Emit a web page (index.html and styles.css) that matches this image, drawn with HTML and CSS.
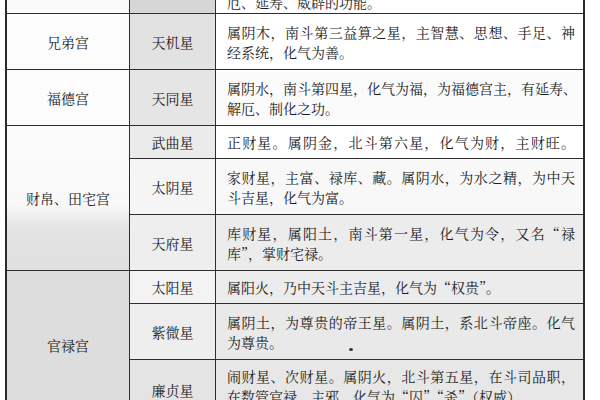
FILE: index.html
```html
<!DOCTYPE html>
<html lang="zh-CN">
<head>
<meta charset="utf-8">
<title>十四主星</title>
<link rel="stylesheet" href="styles.css">
</head>
<body>
<div class="sheet">
  <div class="table">
    <div class="c1 t-top"></div>
    <div class="c2 g-top"></div>
    <div class="c3 top"><span class="ln">厄、延寿、威辟的功能。</span></div>

    <div class="c1">兄弟宫</div>
    <div class="c2 g-a">天机星</div>
    <div class="c3"><span class="ln full">属阴木，南斗第三益算之星，主智慧、思想、手足、神</span><span class="ln">经系统，化气为善。</span></div>

    <div class="c1">福德宫</div>
    <div class="c2 g-b">天同星</div>
    <div class="c3 w1"><span class="ln full">属阴水，南斗第四星，化气为福，为福德宫主，有延寿、</span><span class="ln">解厄、制化之功。</span></div>

    <div class="c1 span3 g-fade">财帛、田宅宫</div>
    <div class="c2 g-c">武曲星</div>
    <div class="c3"><span class="ln full">正财星。属阴金，北斗第六星，化气为财，主财旺。</span></div>

    <div class="c2 g-d">太阴星</div>
    <div class="c3 w2"><span class="ln full">家财星，主富、禄库、藏。属阴水，为水之精，为中天</span><span class="ln">斗吉星，化气为富。</span></div>

    <div class="c2 g-e">天府星</div>
    <div class="c3 g-f"><span class="ln full">库财星，属阳土，南斗第一星，化气为令，又名“禄</span><span class="ln">库”，掌财宅禄。</span></div>

    <div class="c1 span3 g-g">官禄宫</div>
    <div class="c2 g-h">太阳星</div>
    <div class="c3 g-f"><span class="ln">属阳火，乃中天斗主吉星，化气为“权贵”。</span></div>

    <div class="c2 g-e">紫微星</div>
    <div class="c3 g-i"><span class="ln full">属阴土，为尊贵的帝王星。属阴土，系北斗帝座。化气</span><span class="ln">为尊贵。<span class="speck"></span></span></div>

    <div class="c2 g-j">廉贞星</div>
    <div class="c3 g-k bottom"><span class="ln full">闹财星、次财星。属阴火，北斗第五星，在斗司品职，</span><span class="ln">在数管官禄，主邪，化气为“囚”“杀”（权威）</span></div>
  </div>
</div>
</body>
</html>
```

FILE: styles.css
```css
html, body {
  margin: 0;
  padding: 0;
  background: #ffffff;
}

body {
  width: 600px;
  height: 400px;
  overflow: hidden;
  font-family: "Noto Serif CJK SC", "Noto Sans CJK SC", "Liberation Serif", serif;
  font-size: 14px;
  color: #1c1c1c;
}

.sheet {
  padding-left: 5px;
  background: #ffffff;
}

.table {
  display: grid;
  grid-template-columns: 123px 86px 369px;
  grid-template-rows: 14px 56px 56px 33px 56px 56px 33px 56px 60px;
  border-left: 2px solid #2a2a2a;
  width: 578px;
}

.c1, .c2, .c3 {
  box-sizing: border-box;
  border-bottom: 1.5px solid #2e2e2e;
  overflow: hidden;
}

.c1, .c2 {
  border-right: 1.5px solid #2e2e2e;
  display: flex;
  align-items: center;
  justify-content: center;
  line-height: 20px;
  background: #fcfcfc;
}

.c3 {
  border-right: 2px solid #2a2a2a;
  display: flex;
  flex-direction: column;
  justify-content: center;
  padding: 0 8px 0 11px;
  line-height: 20px;
  background: #ffffff;
}

.span3 {
  grid-row: span 3;
}

.ln {
  display: block;
  white-space: nowrap;
}

.full {
  text-align: justify;
  text-align-last: justify;
}

.top {
  justify-content: flex-end;
  padding-bottom: 1px;
}

.bottom {
  justify-content: flex-start;
  padding-top: 6px;
  border-bottom: none;
}

.speck {
  display: inline-block;
  width: 4px;
  height: 3px;
  border-radius: 50%;
  background: #333333;
  margin-left: 66px;
  vertical-align: -3px;
}

.g-top { background: #d6d6d6; }
.g-a { background: #e2e2e2; }
.g-b { background: #e5e5e5; }
.g-c { background: #ebebeb; }
.g-d { background: #f5f5f5; }
.g-e { background: #eeeeee; }
.g-f { background: #ececec; }
.g-g { background: #dddddd; }
.g-h { background: #f3f3f3; }
.g-i { background: #e9e9e9; }
.g-j { background: #e4e4e4; }
.g-k { background: #e7e7e7; }
.w1 { background: #fbfbfb; }
.w2 { background: #f8f8f8; }
.t-top { background: #fafafa; }

.g-fade {
  background: linear-gradient(to bottom, #fcfcfc 0%, #f8f8f8 55%, #e3e3e3 72%, #e0e0e0 100%);
}
```
